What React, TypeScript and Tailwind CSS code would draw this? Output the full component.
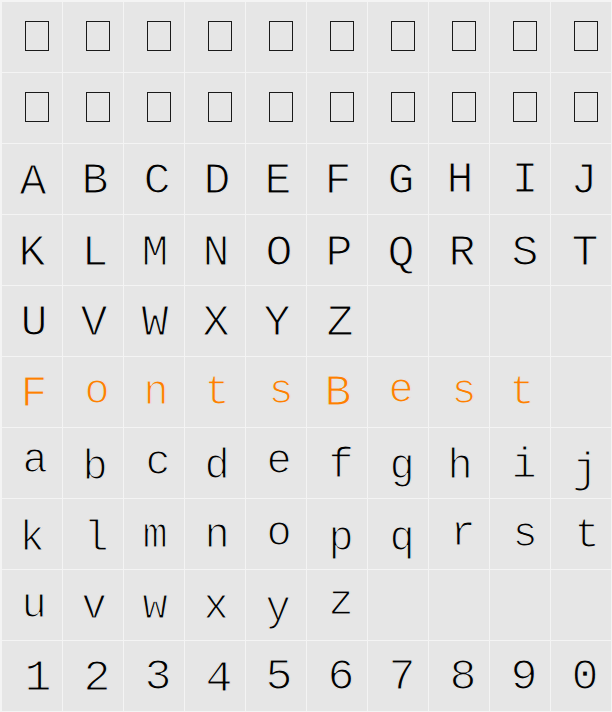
import React from 'react';

type Glyph = [string, number, number]; // char, dx, dy (px)

const TX: Record<number, string> = {
  0: '',
  1: 'translate-x-[1px]',
  2: 'translate-x-[2px]',
  3: 'translate-x-[3px]',
  4: 'translate-x-[4px]',
  5: 'translate-x-[5px]',
  6: 'translate-x-[6px]',
};

const TY: Record<number, string> = {
  [-7]: '-translate-y-[7px]',
  [-6]: '-translate-y-[6px]',
  [-5]: '-translate-y-[5px]',
  [-4]: '-translate-y-[4px]',
  [-3]: '-translate-y-[3px]',
  [-2]: '-translate-y-[2px]',
  [-1]: '-translate-y-[1px]',
  0: '',
  1: 'translate-y-[1px]',
  2: 'translate-y-[2px]',
  3: 'translate-y-[3px]',
  4: 'translate-y-[4px]',
};

const UPPER: Glyph[] = [
  ['A', 1, 1], ['B', 2, 0], ['C', 3, 0], ['D', 2, 0], ['E', 2, 0],
  ['F', 1, 0], ['G', 3, 0], ['H', 1, -1], ['I', 5, -1], ['J', 3, 0],
  ['K', 0, 1], ['L', 2, 1], ['M', 1, 1], ['N', 1, 1], ['O', 3, 1],
  ['P', 2, 1], ['Q', 3, 1], ['R', 3, 1], ['S', 5, 1], ['T', 4, 1],
  ['U', 2, 0], ['V', 1, 0], ['W', 1, 0], ['X', 1, 0], ['Y', 1, 0], ['Z', 3, 0],
];

const BRAND: Glyph[] = [
  ['F', 2, 0], ['o', 4, -4], ['n', 2, -3], ['t', 2, -3], ['s', 5, -4],
  ['B', 1, -1], ['e', 3, -5], ['s', 5, -4], ['t', 2, -3],
];

const LOWER: Glyph[] = [
  ['a', 3, -6], ['b', 2, 1], ['c', 4, -4], ['d', 2, 0], ['e', 3, -5],
  ['f', 4, -1], ['g', 4, 0], ['h', 1, 0], ['i', 4, -1], ['j', 4, 4],
  ['k', 0, 1], ['l', 3, 1], ['m', 1, -2], ['n', 2, -2], ['o', 3, -4],
  ['p', 4, 1], ['q', 4, 1], ['r', 4, -4], ['s', 5, -3], ['t', 6, -2],
  ['u', 2, -3], ['v', 1, -2], ['w', 1, -2], ['x', 1, -2], ['y', 2, 0], ['z', 4, -6],
];

const DIGITS: Glyph[] = [
  ['1', 6, 0], ['2', 4, 0], ['3', 4, -1], ['4', 4, 1], ['5', 3, -1],
  ['6', 4, -1], ['7', 4, -1], ['8', 4, -1], ['9', 4, -1], ['0', 4, -1],
];

type Cell =
  | { kind: 'tofu' }
  | { kind: 'empty' }
  | { kind: 'glyph'; g: Glyph; accent?: boolean };

function pad(cells: Cell[]): Cell[] {
  const out = [...cells];
  while (out.length % 10 !== 0) out.push({ kind: 'empty' });
  return out;
}

const isLower = (c: string) => c >= 'a' && c <= 'z';

const CELLS: Cell[] = [
  ...Array.from({ length: 20 }, () => ({ kind: 'tofu' }) as Cell),
  ...pad(UPPER.map(g => ({ kind: 'glyph', g }) as Cell)),
  ...pad(BRAND.map(g => ({ kind: 'glyph', g, accent: true }) as Cell)),
  ...pad(LOWER.map(g => ({ kind: 'glyph', g }) as Cell)),
  ...DIGITS.map(g => ({ kind: 'glyph', g }) as Cell),
];

function GlyphCell({ g, accent }: { g: Glyph; accent?: boolean }) {
  const [ch, dx, dy] = g;
  const size = isLower(ch) ? 'text-[42px] leading-[42px] mt-[18px]' : 'text-[45px] leading-[45px] mt-[15px]';
  return (
    <div className="flex h-[70px] justify-center bg-[#e6e6e6]">
      {/* bg-coloured stroke thins the glyphs toward the typewriter weight */}
      <span
        className={`block ${size} ${TX[dx]} ${TY[dy]} ${accent ? 'text-[#ff7f00]' : 'text-black'} [-webkit-text-stroke:1.2px_#e6e6e6]`}
      >
        {ch}
      </span>
    </div>
  );
}

export default function App() {
  return (
    <div className="h-[712px] w-[612px] bg-[#f4f4f4] pl-[2px] pt-[2px] font-['Liberation_Mono',monospace]">
      <div className="grid grid-cols-[repeat(10,60px)] grid-rows-[repeat(10,70px)] gap-[1px]">
        {CELLS.map((cell, i) => {
          if (cell.kind === 'tofu') {
            return (
              <div key={i} className="h-[70px] bg-[#e6e6e6] pl-[23px] pt-[19px]">
                <div className="h-[30px] w-[24px] border border-[#1a1a1a]" />
              </div>
            );
          }
          if (cell.kind === 'empty') {
            return <div key={i} className="h-[70px] bg-[#e6e6e6]" />;
          }
          return <GlyphCell key={i} g={cell.g} accent={cell.accent} />;
        })}
      </div>
    </div>
  );
}
